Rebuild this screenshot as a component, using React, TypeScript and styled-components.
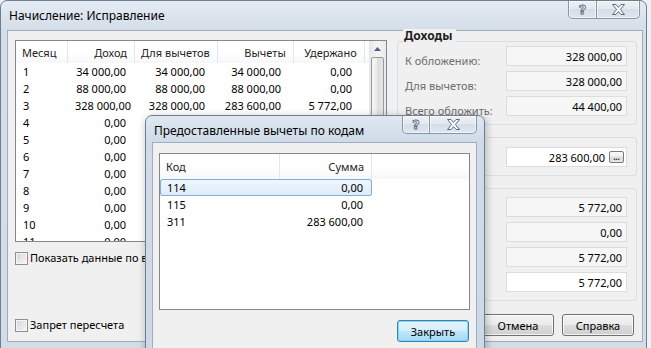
import React from 'react';
import styled, { createGlobalStyle } from 'styled-components';

const FONT = `"Noto Sans", "Open Sans", "DejaVu Sans", sans-serif`;

const GlobalStyle = createGlobalStyle`
  html, body {
    margin: 0;
    padding: 0;
  }
  body {
    background: #eef1f4;
    font-family: ${FONT};
    font-size: 11px;
    color: #000;
  }
  * {
    box-sizing: border-box;
  }
`;

type Align = 'left' | 'right';
type Column = { title: string; width: number; align: Align };

const monthColumns: Column[] = [
  { title: 'Месяц', width: 52, align: 'left' },
  { title: 'Доход', width: 67, align: 'right' },
  { title: 'Для вычетов', width: 79, align: 'right' },
  { title: 'Вычеты', width: 76, align: 'right' },
  { title: 'Удержано', width: 71, align: 'right' },
];

const monthRows: string[][] = [
  ['1', '34 000,00', '34 000,00', '34 000,00', '0,00'],
  ['2', '88 000,00', '88 000,00', '88 000,00', '0,00'],
  ['3', '328 000,00', '328 000,00', '283 600,00', '5 772,00'],
  ...[4, 5, 6, 7, 8, 9, 10, 11, 12].map((n) => [String(n), '0,00', '0,00', '0,00', '0,00']),
];

const codeColumns: Column[] = [
  { title: 'Код', width: 120, align: 'left' },
  { title: 'Сумма', width: 92, align: 'right' },
];

const codeRows: string[][] = [
  ['114', '0,00'],
  ['115', '0,00'],
  ['311', '283 600,00'],
];

type FieldDef = { label: string; value: string; editable?: boolean; picker?: boolean };

const groups: { title: string; top: number; padTop: number; fields: FieldDef[] }[] = [
  {
    title: 'Доходы',
    top: 10,
    padTop: 4,
    fields: [
      { label: 'К обложению:', value: '328 000,00' },
      { label: 'Для вычетов:', value: '328 000,00' },
      { label: 'Всего обложить:', value: '44 400,00' },
    ],
  },
  {
    title: 'Вычеты',
    top: 12,
    padTop: 9,
    fields: [{ label: 'Сумма:', value: '283 600,00', editable: true, picker: true }],
  },
  {
    title: 'Налог',
    top: 12,
    padTop: 8,
    fields: [
      { label: 'Исчислено:', value: '5 772,00' },
      { label: 'Удержано:', value: '0,00' },
      { label: 'Удержать:', value: '5 772,00' },
      { label: 'Итого:', value: '5 772,00', editable: true },
    ],
  },
];

function CloseGlyph() {
  return (
    <svg width="13" height="11" viewBox="0 0 13 11">
      <path
        d="M0.5 0.5 H4 L6.5 3.4 L9 0.5 H12.5 L8.4 5.5 L12.5 10.5 H9 L6.5 7.6 L4 10.5 H0.5 L4.6 5.5 Z"
        fill="#fbfcfd"
        stroke="#5d6a79"
        strokeWidth="1"
        strokeLinejoin="round"
      />
    </svg>
  );
}

function CaptionButtons({ helpWidth, closeWidth, inset }: { helpWidth: number; closeWidth: number; inset: number }) {
  return (
    <CaptionGroup $inset={inset}>
      <CaptionButton $width={helpWidth} $first>
        <HelpGlyph>?</HelpGlyph>
      </CaptionButton>
      <CaptionButton $width={closeWidth}>
        <CloseGlyph />
      </CaptionButton>
    </CaptionGroup>
  );
}

type ListProps = {
  columns: Column[];
  rows: string[][];
  height: number;
  headerHeight: number;
  selected?: number;
  scrollbar?: boolean;
};

function ListView({ columns, rows, height, headerHeight, selected, scrollbar }: ListProps) {
  return (
    <ListFrame $height={height}>
      <ListBody>
        <HeaderRow $height={headerHeight}>
          {columns.map((c) => (
            <HeaderCell key={c.title} $width={c.width} $align={c.align}>
              {c.title}
            </HeaderCell>
          ))}
          <HeaderFiller />
        </HeaderRow>
        {rows.map((row, i) => (
          <Row key={i} $selected={i === selected}>
            {row.map((value, j) => (
              <Cell key={j} $width={columns[j].width} $align={columns[j].align}>
                {value}
              </Cell>
            ))}
          </Row>
        ))}
      </ListBody>
      {scrollbar && (
        <ScrollBar>
          <ScrollArrow>
            <svg width="7" height="4" viewBox="0 0 7 4">
              <path d="M0 4 L3.5 0 L7 4 Z" fill="#4d6185" />
            </svg>
          </ScrollArrow>
          <ScrollThumb />
        </ScrollBar>
      )}
    </ListFrame>
  );
}

export default function App() {
  return (
    <Screen>
      <GlobalStyle />
      <MainWindow>
        <TitleBar $height={29}>
          <Title>Начисление: Исправление</Title>
          <CaptionButtons helpWidth={29} closeWidth={43} inset={3} />
        </TitleBar>
        <MainClient>
          <LeftColumn>
            <ListView columns={monthColumns} rows={monthRows} height={202} headerHeight={22} scrollbar />
            <CheckRow>
              <CheckBox />
              Показать данные по всем месяцам
            </CheckRow>
          </LeftColumn>
          <RightColumn>
            {groups.map((g) => (
              <GroupBox key={g.title} $top={g.top} $padTop={g.padTop}>
                <GroupCaption>{g.title}</GroupCaption>
                {g.fields.map((f) => (
                  <FieldRow key={f.label}>
                    <FieldLabel>{f.label}</FieldLabel>
                    <Field $editable={f.editable}>
                      {f.value}
                      {f.picker && <PickerButton>...</PickerButton>}
                    </Field>
                  </FieldRow>
                ))}
              </GroupBox>
            ))}
          </RightColumn>
          <BottomRow>
            <CheckRow>
              <CheckBox />
              Запрет пересчета
            </CheckRow>
            <ButtonBar>
              <PushButton>ОК</PushButton>
              <PushButton>Отмена</PushButton>
              <PushButton>Справка</PushButton>
            </ButtonBar>
          </BottomRow>
        </MainClient>
      </MainWindow>

      <Dialog>
        <TitleBar $height={26}>
          <Title>Предоставленные вычеты по кодам</Title>
          <CaptionButtons helpWidth={28} closeWidth={47} inset={0} />
        </TitleBar>
        <DialogClient>
          <ListView columns={codeColumns} rows={codeRows} height={157} headerHeight={25} selected={0} />
          <DialogFooter>
            <PushButton $default>Закрыть</PushButton>
          </DialogFooter>
        </DialogClient>
      </Dialog>
    </Screen>
  );
}

const Screen = styled.div`
  position: relative;
  width: 651px;
  height: 348px;
  overflow: hidden;
`;

const Window = styled.div`
  display: flex;
  flex-direction: column;
  border: 1px solid #6e7f91;
  border-radius: 7px 7px 0 0;
  background: linear-gradient(#e4ebf3, #d5dfe9 28px, #d2dde8);
`;

const MainWindow = styled(Window)`
  width: 647px;
  height: 352px;
  padding: 0 3px 9px 6px;
`;

const Dialog = styled(Window)`
  position: absolute;
  left: 145px;
  top: 115px;
  width: 340px;
  height: 250px;
  padding: 0 7px 7px 6px;
  background: linear-gradient(#dfe8f2, #cfdbe8 26px, #cdd9e6);
  box-shadow: 1px 2px 8px rgba(0, 0, 0, 0.28);
`;

const TitleBar = styled.div<{ $height: number }>`
  display: flex;
  justify-content: space-between;
  align-items: flex-start;
  flex-shrink: 0;
  height: ${(p) => p.$height}px;
`;

const Title = styled.span`
  padding: 7px 0 0 2px;
  font-size: 12px;
  line-height: 16px;
  color: #000;
  white-space: nowrap;
`;

const CaptionGroup = styled.div<{ $inset: number }>`
  display: flex;
  margin-right: ${(p) => p.$inset}px;
`;

const CaptionButton = styled.div<{ $width: number; $first?: boolean }>`
  display: flex;
  align-items: center;
  justify-content: center;
  width: ${(p) => p.$width}px;
  height: 18px;
  border: 1px solid #8896a6;
  border-top: none;
  border-left-width: ${(p) => (p.$first ? 1 : 0)}px;
  border-radius: ${(p) => (p.$first ? '0 0 0 5px' : '0 0 5px 0')};
  background: linear-gradient(#edf1f5, #e1e8ef 50%, #d5dee8 50%, #dfe6ee);
  box-shadow: inset 0 0 0 1px rgba(255, 255, 255, 0.55);
`;

const HelpGlyph = styled.span`
  font-family: "DejaVu Sans", sans-serif;
  font-weight: bold;
  font-size: 13px;
  line-height: 14px;
  color: #fbfcfd;
  -webkit-text-stroke: 0.9px #5d6a79;
`;

const Client = styled.div`
  flex: 1;
  background: #f0f0f0;
  border: 1px solid #9fadbc;
`;

const MainClient = styled(Client)`
  display: grid;
  grid-template-columns: 372px 240px;
  align-content: start;
  column-gap: 10px;
  row-gap: 13px;
  padding: 0 5px 0 7px;
`;

const LeftColumn = styled.div`
  display: flex;
  flex-direction: column;
  gap: 8px;
  padding-top: 9px;
`;

const RightColumn = styled.div`
  display: flex;
  flex-direction: column;
`;

const ListFrame = styled.div<{ $height: number }>`
  display: flex;
  height: ${(p) => p.$height}px;
  border: 1px solid #828790;
  background: #fff;
  overflow: hidden;
  flex-shrink: 0;
`;

const ListBody = styled.div`
  flex: 1;
  min-width: 0;
`;

const HeaderRow = styled.div<{ $height: number }>`
  display: flex;
  height: ${(p) => p.$height}px;
  background: linear-gradient(#ffffff, #ffffff 55%, #f6f7f9);
`;

const HeaderCell = styled.div<{ $width: number; $align: Align }>`
  display: flex;
  align-items: center;
  justify-content: ${(p) => (p.$align === 'right' ? 'flex-end' : 'flex-start')};
  flex: 0 0 ${(p) => p.$width}px;
  padding: 0 7px 0 6px;
  border-right: 1px solid #e3e6ea;
  color: #1e1e1e;
  white-space: nowrap;
`;

const HeaderFiller = styled.div`
  flex: 1;
`;

const Row = styled.div<{ $selected?: boolean }>`
  display: flex;
  align-items: center;
  width: max-content;
  height: 17px;
  border-radius: 3px;
  background: ${(p) => (p.$selected ? 'linear-gradient(#f1f7fd, #dcebfa)' : 'transparent')};
  box-shadow: ${(p) => (p.$selected ? 'inset 0 0 0 1px #84acdd' : 'none')};
`;

const Cell = styled.div<{ $width: number; $align: Align }>`
  flex: 0 0 ${(p) => p.$width}px;
  padding: 0 9px 0 7px;
  text-align: ${(p) => p.$align};
  white-space: nowrap;
  overflow: hidden;
`;

const ScrollBar = styled.div`
  display: flex;
  flex-direction: column;
  flex: 0 0 17px;
  background: linear-gradient(to right, #e6e6e6, #f3f3f3 40%, #f3f3f3 60%, #e9e9e9);
`;

const ScrollArrow = styled.div`
  display: flex;
  align-items: center;
  justify-content: center;
  height: 16px;
`;

const ScrollThumb = styled.div`
  height: 150px;
  margin: 0 2px 0 2px;
  border: 1px solid #979a9f;
  border-radius: 2px;
  background: linear-gradient(to right, #f6f6f6, #ececec 50%, #dedede 50%, #e4e4e4);
`;

const CheckRow = styled.label`
  display: flex;
  align-items: center;
  gap: 2px;
  white-space: nowrap;
  line-height: 16px;
`;

const CheckBox = styled.span`
  flex: 0 0 13px;
  height: 13px;
  border: 1px solid #8e8f8f;
  background: linear-gradient(135deg, #d4d4d4, #f7f7f7);
  box-shadow: inset 0 0 0 1px #f6f6f6;
`;

const GroupBox = styled.div<{ $top: number; $padTop: number }>`
  position: relative;
  display: flex;
  flex-direction: column;
  gap: 5px;
  margin-top: ${(p) => p.$top}px;
  padding: ${(p) => p.$padTop}px 9px 8px 7px;
  border: 1px solid #d5dfe5;
  border-radius: 3px;
`;

const GroupCaption = styled.span`
  position: absolute;
  left: 5px;
  top: -13px;
  padding: 0 4px 0 1px;
  background: #f0f0f0;
  font-weight: bold;
  font-size: 12px;
  line-height: 14px;
  color: #1e1e1e;
`;

const FieldRow = styled.div`
  display: flex;
  justify-content: space-between;
  align-items: flex-start;
  height: 20px;
`;

const FieldLabel = styled.span`
  padding-top: 7px;
  line-height: 16px;
  color: #6d6d6d;
  white-space: nowrap;
`;

const Field = styled.div<{ $editable?: boolean }>`
  display: flex;
  align-items: center;
  justify-content: flex-end;
  gap: 4px;
  width: 121px;
  height: 20px;
  padding: 0 4px;
  border: 1px solid #dcdcdc;
  background: ${(p) => (p.$editable ? '#ffffff' : '#f6f6f6')};
  white-space: nowrap;
`;

const PickerButton = styled.span`
  display: flex;
  align-items: flex-end;
  justify-content: center;
  width: 15px;
  height: 12px;
  margin-right: -2px;
  padding-bottom: 2px;
  border: 1px solid #7b7b7b;
  border-radius: 2px;
  background: linear-gradient(#fbfbfb, #ececec 50%, #dcdcdc 50%, #e6e6e6);
  font-size: 8px;
  line-height: 6px;
  font-weight: bold;
  color: #222;
`;

const BottomRow = styled.div`
  grid-column: 1 / -1;
  display: flex;
  justify-content: space-between;
  align-items: center;
  padding-right: 3px;
`;

const ButtonBar = styled.div`
  display: flex;
  gap: 8px;
`;

const PushButton = styled.button<{ $default?: boolean }>`
  width: 72px;
  height: 22px;
  padding: 0;
  border: 1px solid ${(p) => (p.$default ? '#3c7fb1' : '#707070')};
  border-radius: 3px;
  background: ${(p) =>
    p.$default
      ? 'linear-gradient(#e5f4fc, #d4eefb 50%, #bde6fd 50%, #a7d9f5)'
      : 'linear-gradient(#f2f2f2, #ebebeb 50%, #dddddd 50%, #cfcfcf)'};
  box-shadow: inset 0 0 0 1px ${(p) => (p.$default ? 'rgba(120, 215, 245, 0.9)' : 'rgba(255, 255, 255, 0.75)')};
  font-family: ${FONT};
  font-size: 11px;
  color: #000;
`;

const DialogClient = styled(Client)`
  display: flex;
  flex-direction: column;
  gap: 10px;
  padding: 10px 6px 0 6px;
`;

const DialogFooter = styled.div`
  display: flex;
  justify-content: flex-end;
  padding-right: 1px;
`;
